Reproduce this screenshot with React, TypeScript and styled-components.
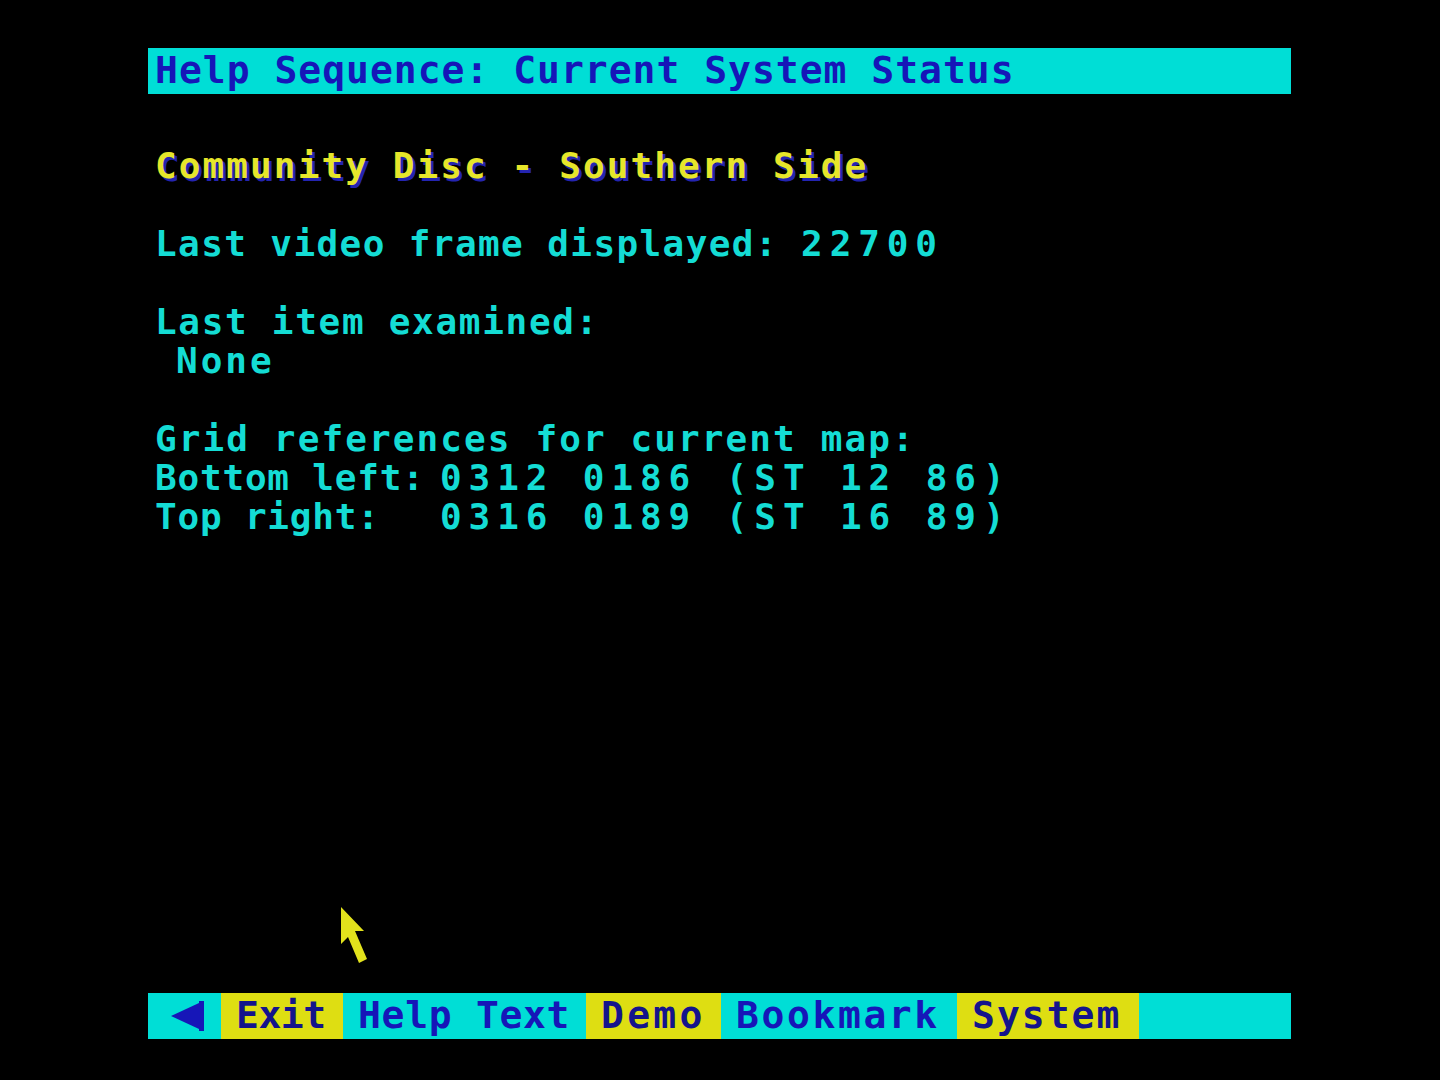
import React from "react";
import styled, { createGlobalStyle } from "styled-components";

const CYAN = "#00ded6";
const YELLOW = "#dede12";
const BLUE = "#1616b8";
const TEXT_CYAN = "#14dcd4";
const LINE = 39;
const BAR_FONT = 38;
const BODY_FONT = 36;

const GlobalStyle = createGlobalStyle`
  html, body {
    margin: 0;
    padding: 0;
    background: #000;
  }
  body {
    font-family: "DejaVu Sans Mono", "Liberation Mono", monospace;
    font-weight: bold;
  }
`;

const Page = styled.div`
  position: relative;
  box-sizing: border-box;
  height: 1080px;
  width: 1440px;
  padding: 48px 0 41px 148px;
  display: flex;
  flex-direction: column;
  background: #000;
  overflow: hidden;
`;

const TitleBar = styled.div`
  width: 1143px;
  height: 46px;
  box-sizing: border-box;
  background: ${CYAN};
  color: ${BLUE};
  display: flex;
  align-items: center;
  padding: 0 0 3px 7px;
  font-size: ${BAR_FONT}px;
  letter-spacing: 1px;
  white-space: pre;
`;

const Content = styled.div`
  margin-top: 52px;
  padding-left: 7px;
  display: flex;
  flex-direction: column;
`;

const Line = styled.div<{ $before?: number; $indent?: number; $track?: number; $heading?: boolean }>`
  height: ${LINE}px;
  line-height: ${LINE}px;
  margin-top: ${(p) => (p.$before ?? 0) * LINE}px;
  padding-left: ${(p) => p.$indent ?? 0}px;
  font-size: ${BODY_FONT}px;
  letter-spacing: ${(p) => p.$track ?? 2}px;
  white-space: pre;
  color: ${(p) => (p.$heading ? "#e6e62a" : TEXT_CYAN)};
  text-shadow: ${(p) => (p.$heading ? "3px 3px 0 #2424b0" : "none")};
`;

const Num = styled.span`
  letter-spacing: 6.9px;
`;

const GridRow = styled.div`
  display: grid;
  grid-template-columns: 285px auto;
  height: ${LINE}px;
  line-height: ${LINE}px;
  font-size: ${BODY_FONT}px;
  color: ${TEXT_CYAN};
  white-space: pre;
`;

const Label = styled.span`
  letter-spacing: 0.8px;
`;

const Footer = styled.div`
  margin-top: auto;
  width: 1143px;
  height: 46px;
  display: flex;
  background: ${CYAN};
`;

const ArrowCell = styled.div`
  width: 73px;
  display: flex;
  align-items: center;
  padding-left: 23px;
  box-sizing: border-box;
`;

const Tab = styled.div<{ $yellow?: boolean; $w: number; $track: number }>`
  width: ${(p) => p.$w}px;
  box-sizing: border-box;
  background: ${(p) => (p.$yellow ? YELLOW : CYAN)};
  color: ${(p) => (p.$yellow ? "#14148c" : BLUE)};
  display: flex;
  align-items: center;
  padding: 0 0 2px 15px;
  font-size: ${BAR_FONT}px;
  letter-spacing: ${(p) => p.$track}px;
  white-space: pre;
`;

const Pointer = styled.svg`
  position: absolute;
  left: 340px;
  top: 907px;
`;

export default function App() {
  return (
    <>
      <GlobalStyle />
      <Page>
        <TitleBar>Help Sequence: Current System Status</TitleBar>
        <Content>
          <Line $heading $track={2.1}>Community Disc - Southern Side</Line>
          <Line $before={1} $track={1.4}>
            Last video frame displayed: <Num>22700</Num>
          </Line>
          <Line $before={1} $track={1.7}>Last item examined:</Line>
          <Line $indent={21} $track={3}>None</Line>
          <Line $before={1} $track={2.1}>Grid references for current map:</Line>
          <GridRow>
            <Label>Bottom left:</Label>
            <Num>0312 0186 (ST 12 86)</Num>
          </GridRow>
          <GridRow>
            <Label>Top right:</Label>
            <Num>0316 0189 (ST 16 89)</Num>
          </GridRow>
        </Content>
        <Footer>
          <ArrowCell>
            <svg width="33" height="30" viewBox="0 0 33 30">
              <polygon points="0,15 28,2 28,28" fill={BLUE} />
              <rect x="28" y="0" width="5" height="30" fill={BLUE} />
            </svg>
          </ArrowCell>
          <Tab $yellow $w={122} $track={-0.5}>Exit</Tab>
          <Tab $w={243} $track={0.7}>Help Text</Tab>
          <Tab $yellow $w={135} $track={3.3}>Demo</Tab>
          <Tab $w={236} $track={2.6}>Bookmark</Tab>
          <Tab $yellow $w={182} $track={2}>System</Tab>
        </Footer>
        <Pointer width="28" height="58" viewBox="0 0 28 58">
          <polygon
            points="1,0 24,24 15,24 27,52 19,56 8,30 1,37"
            fill="#e2e21c"
          />
        </Pointer>
      </Page>
    </>
  );
}
